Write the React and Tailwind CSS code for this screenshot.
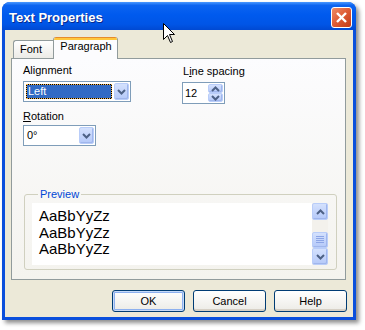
import React from "react";

function Chevron({ up = false, className = "" }) {
  return (
    <svg width="9" height="6" viewBox="0 0 9 6" className={className}>
      {up ? (
        <polyline points="1,5 4.5,1.5 8,5" fill="none" stroke="#4D6185" strokeWidth="2" />
      ) : (
        <polyline points="1,1 4.5,4.5 8,1" fill="none" stroke="#4D6185" strokeWidth="2" />
      )}
    </svg>
  );
}

function SmallBtn({ children, className = "" }) {
  return (
    <div
      className={`flex items-center justify-center rounded-[2px] border border-[#B9CDF9] bg-linear-to-b from-[#D4E1FD] to-[#B5C9F9] shadow-[inset_-1px_-1px_0_#A0B6EC] ${className}`}
    >
      {children}
    </div>
  );
}

function Combo({ width, selected = false, children, className = "" }) {
  return (
    <div className={`h-[21px] ${width} border border-[#7F9DB9] bg-white flex p-[1px] ${className}`}>
      {selected ? (
        <div className="flex-1 flex p-[1px] pr-[2px]">
          <span className="flex-1 flex bg-black">
            <span className="flex-1 flex items-center pl-[1px] border border-dotted border-[#F4B24A] bg-[#316AC5] bg-clip-padding text-white">
              {children}
            </span>
          </span>
        </div>
      ) : (
        <div className="flex-1 flex items-center pl-[2px]">{children}</div>
      )}
      <SmallBtn className="w-[15px]">
        <Chevron />
      </SmallBtn>
    </div>
  );
}

function Button({ children, focused = false }) {
  return (
    <div
      className={`w-[73px] h-[22px] rounded-[3px] border border-[#003C74] bg-linear-to-b from-white to-[#ECEBE6] flex items-center justify-center ${
        focused ? "shadow-[inset_0_0_0_1px_#C6DAF8,inset_0_0_0_2px_#8DB0EF]" : "shadow-[inset_0_-2px_0_#D6D0C5]"
      }`}
    >
      {children}
    </div>
  );
}

export default function App() {
  return (
    <div className="relative w-[365px] h-[330px] bg-white pt-[2px] pl-[2px] font-['Liberation_Sans',Arial,sans-serif] text-[11px] leading-[13px] text-black">
      <div className="w-[354px] h-[318px] flex flex-col rounded-t-[8px] bg-[#0A4FDC] shadow-[3px_3px_4px_rgba(0,0,0,0.45)]">
        {/* Title bar */}
        <div className="h-[28px] flex items-start rounded-t-[8px] bg-[linear-gradient(180deg,#4A98FF_0%,#0D64F0_12%,#005AEE_45%,#0055E6_80%,#0049D2_100%)]">
          <div className="pt-[8px] pl-[7px] text-[13px] leading-[15px] font-bold text-white [text-shadow:1px_1px_0_#0A2A8C]">
            Text Properties
          </div>
          <div className="ml-auto mt-[5px] mr-[4px] w-[21px] h-[21px] rounded-[3px] border border-white bg-linear-to-br from-[#EE8C66] via-[#DD5A34] to-[#C23A16] flex items-center justify-center">
            <svg width="13" height="13" viewBox="0 0 13 13">
              <line x1="2" y1="2" x2="11" y2="11" stroke="white" strokeWidth="2.4" />
              <line x1="11" y1="2" x2="2" y2="11" stroke="white" strokeWidth="2.4" />
            </svg>
          </div>
        </div>

        {/* Body */}
        <div className="flex-1 mx-[3px] mb-[3px] bg-[#ECE9D8] flex flex-col">
          {/* Tabs */}
          <div className="h-[28px] flex items-end pl-[8px]">
            <div className="w-[40px] h-[18px] border-t border-l border-[#919B9C] rounded-tl-[3px] bg-linear-to-b from-white to-[#ECEBE6] pt-[2px] pl-[6px]">
              Font
            </div>
            <div className="relative z-10 -mb-[1px] w-[65px] h-[22px] rounded-t-[3px] border-l border-r border-[#919B9C] bg-[#FCFCFE] flex flex-col overflow-hidden">
              <div className="h-[1px] bg-[#E68B2C]" />
              <div className="h-[2px] bg-[#FFC73C]" />
              <div className="text-center pl-[1px]">Paragraph</div>
            </div>
          </div>

          {/* Panel */}
          <div className="ml-[6px] w-[335px] h-[222px] border border-[#919B9C] bg-linear-to-b from-[#FCFCFE] to-[#F4F3EE] flex flex-col">
            <div className="flex pt-[5px] pl-[11px]">
              <div className="w-[159px] flex flex-col items-start">
                <div>Alignment</div>
                <Combo width="w-[108px]" selected className="mt-[4px]">
                  Left
                </Combo>
                <div className="mt-[8px]">
                  <span className="underline">R</span>otation
                </div>
                <Combo width="w-[73px]" className="mt-[2px]">
                  0°
                </Combo>
              </div>
              <div className="flex flex-col items-start mt-[1px]">
                <div className="pl-[1px]">
                  L<span className="underline">i</span>ne spacing
                </div>
                <div className="mt-[4px] w-[43px] h-[22px] border border-[#7F9DB9] bg-white flex p-[1px]">
                  <div className="flex-1 flex items-center pl-[1px]">12</div>
                  <div className="w-[15px] flex flex-col">
                    <SmallBtn className="flex-1">
                      <Chevron up />
                    </SmallBtn>
                    <SmallBtn className="flex-1">
                      <Chevron />
                    </SmallBtn>
                  </div>
                </div>
              </div>
            </div>

            <fieldset className="mt-[42px] ml-[12px] w-[313px] border border-[#D0D0BF] rounded-[3px] pl-[7px] pr-[8px] pb-[4px]">
              <legend className="ml-[6px] px-[2px] text-[#0046D5]">Preview</legend>
              <div className="mt-[2px] h-[62px] bg-white flex">
                <div className="flex-1 pl-[7px] pt-[5px] text-[15px] leading-[16.6px]">
                  <div>AaBbYyZz</div>
                  <div>AaBbYyZz</div>
                  <div>AaBbYyZz</div>
                </div>
                <div className="w-[16px] flex flex-col bg-[#F3F1EC]">
                  <SmallBtn className="h-[17px]">
                    <Chevron up />
                  </SmallBtn>
                  <div className="h-[12px]" />
                  <SmallBtn className="h-[16px]">
                    <svg width="8" height="8" viewBox="0 0 8 8">
                      <line x1="0" y1="0.5" x2="8" y2="0.5" stroke="#8CA5E6" />
                      <line x1="0" y1="2.5" x2="8" y2="2.5" stroke="#8CA5E6" />
                      <line x1="0" y1="4.5" x2="8" y2="4.5" stroke="#8CA5E6" />
                      <line x1="0" y1="6.5" x2="8" y2="6.5" stroke="#8CA5E6" />
                    </svg>
                  </SmallBtn>
                  <SmallBtn className="h-[17px]">
                    <Chevron />
                  </SmallBtn>
                </div>
              </div>
            </fieldset>
          </div>

          {/* Buttons */}
          <div className="mt-[10px] flex justify-end gap-[8px] pr-[6px]">
            <Button focused>OK</Button>
            <Button>Cancel</Button>
            <Button>Help</Button>
          </div>
        </div>
      </div>

      {/* Mouse cursor */}
      <svg className="absolute left-[163px] top-[23px]" width="13" height="21" viewBox="0 0 13 21">
        <path d="M0.5,0.5 L0.5,16.5 L4.5,12.5 L7.5,19.5 L9.5,18.5 L6.5,11.5 L11.5,11.5 Z" fill="white" stroke="black" strokeWidth="1" />
      </svg>
    </div>
  );
}
